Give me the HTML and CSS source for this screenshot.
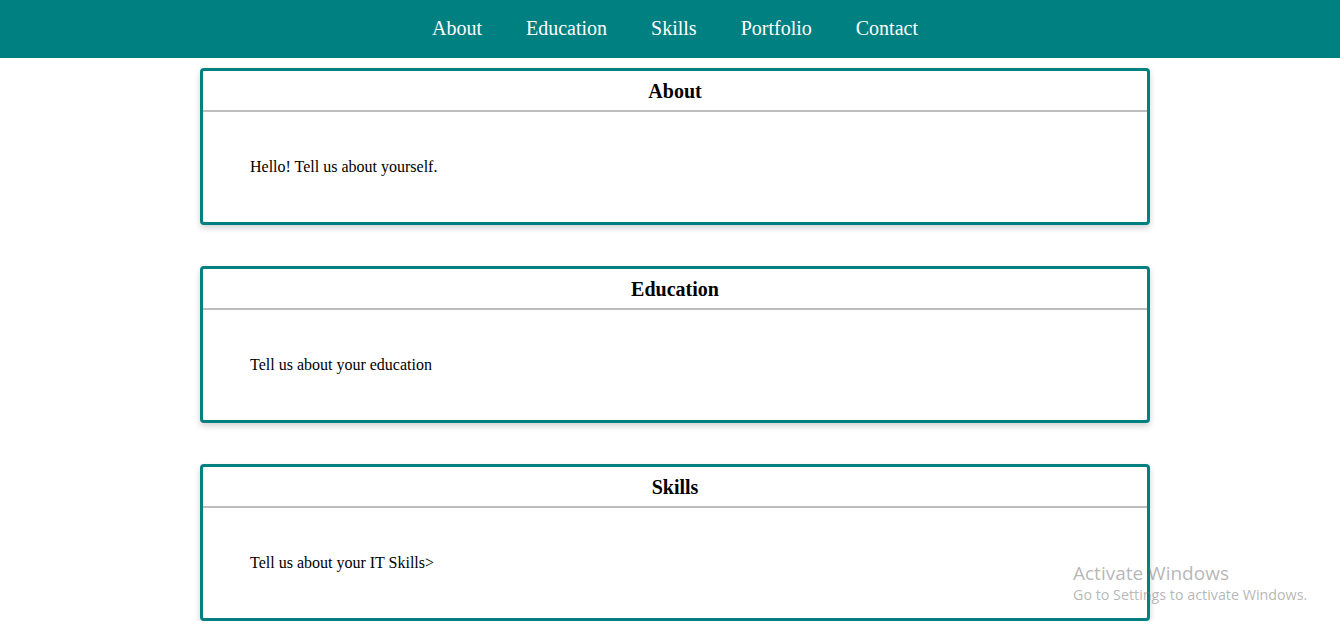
FILE: index.html
```html
<!DOCTYPE html>
<html>
<head>
<meta charset="utf-8">
<link rel="stylesheet" href="styles.css">
</head>
<body>
<nav class="topnav">
  <a href="#about">About</a>
  <a href="#education">Education</a>
  <a href="#skills">Skills</a>
  <a href="#portfolio">Portfolio</a>
  <a href="#contact">Contact</a>
</nav>
<main class="content">
  <section class="card" id="about">
    <h2 class="card-title">About</h2>
    <div class="card-body">Hello! Tell us about yourself.</div>
  </section>
  <section class="card" id="education">
    <h2 class="card-title">Education</h2>
    <div class="card-body">Tell us about your education</div>
  </section>
  <section class="card" id="skills">
    <h2 class="card-title">Skills</h2>
    <div class="card-body">Tell us about your IT Skills&gt;</div>
  </section>
</main>
<div class="watermark">
  <div class="wm-title">Activate Windows</div>
  <div class="wm-sub">Go to Settings to activate Windows.</div>
</div>
</body>
</html>
```
FILE: styles.css
```css
html, body {
  margin: 0;
  padding: 0;
  background: #fff;
  font-family: "Liberation Serif", "Times New Roman", serif;
  color: #000;
  overflow: hidden;
}
.topnav {
  height: 58px;
  background: #008080;
  display: flex;
  justify-content: center;
  align-items: center;
  gap: 44px;
  padding-left: 10px;
  padding-bottom: 1px;
  box-sizing: border-box;
}
.topnav a {
  color: #fff;
  text-decoration: none;
  font-size: 20px;
}
.content {
  padding-left: 10px;
  padding-top: 10px;
  display: flex;
  flex-direction: column;
  gap: 41px;
}
.card {
  width: 944px;
  margin: 0 auto;
  border: 3px solid #008080;
  border-radius: 4px;
  box-shadow: 0 3px 6px rgba(0,0,0,0.18);
  background: #fff;
}
.card-title {
  margin: 0;
  height: 39px;
  line-height: 41px;
  text-align: center;
  font-size: 20px;
  font-weight: bold;
  border-bottom: 2px solid #bdbdbd;
}
.card-body {
  height: 110px;
  box-sizing: border-box;
  padding: 0 47px;
  display: flex;
  align-items: center;
  font-size: 16px;
}
.watermark {
  position: absolute;
  left: 1073px;
  top: 562px;
  color: rgba(120,120,120,0.55);
  font-family: "Open Sans", "Noto Sans", sans-serif;
}
.wm-title {
  font-size: 19px;
  line-height: 22px;
}
.wm-sub {
  font-size: 14.3px;
  line-height: 22px;
}
```
